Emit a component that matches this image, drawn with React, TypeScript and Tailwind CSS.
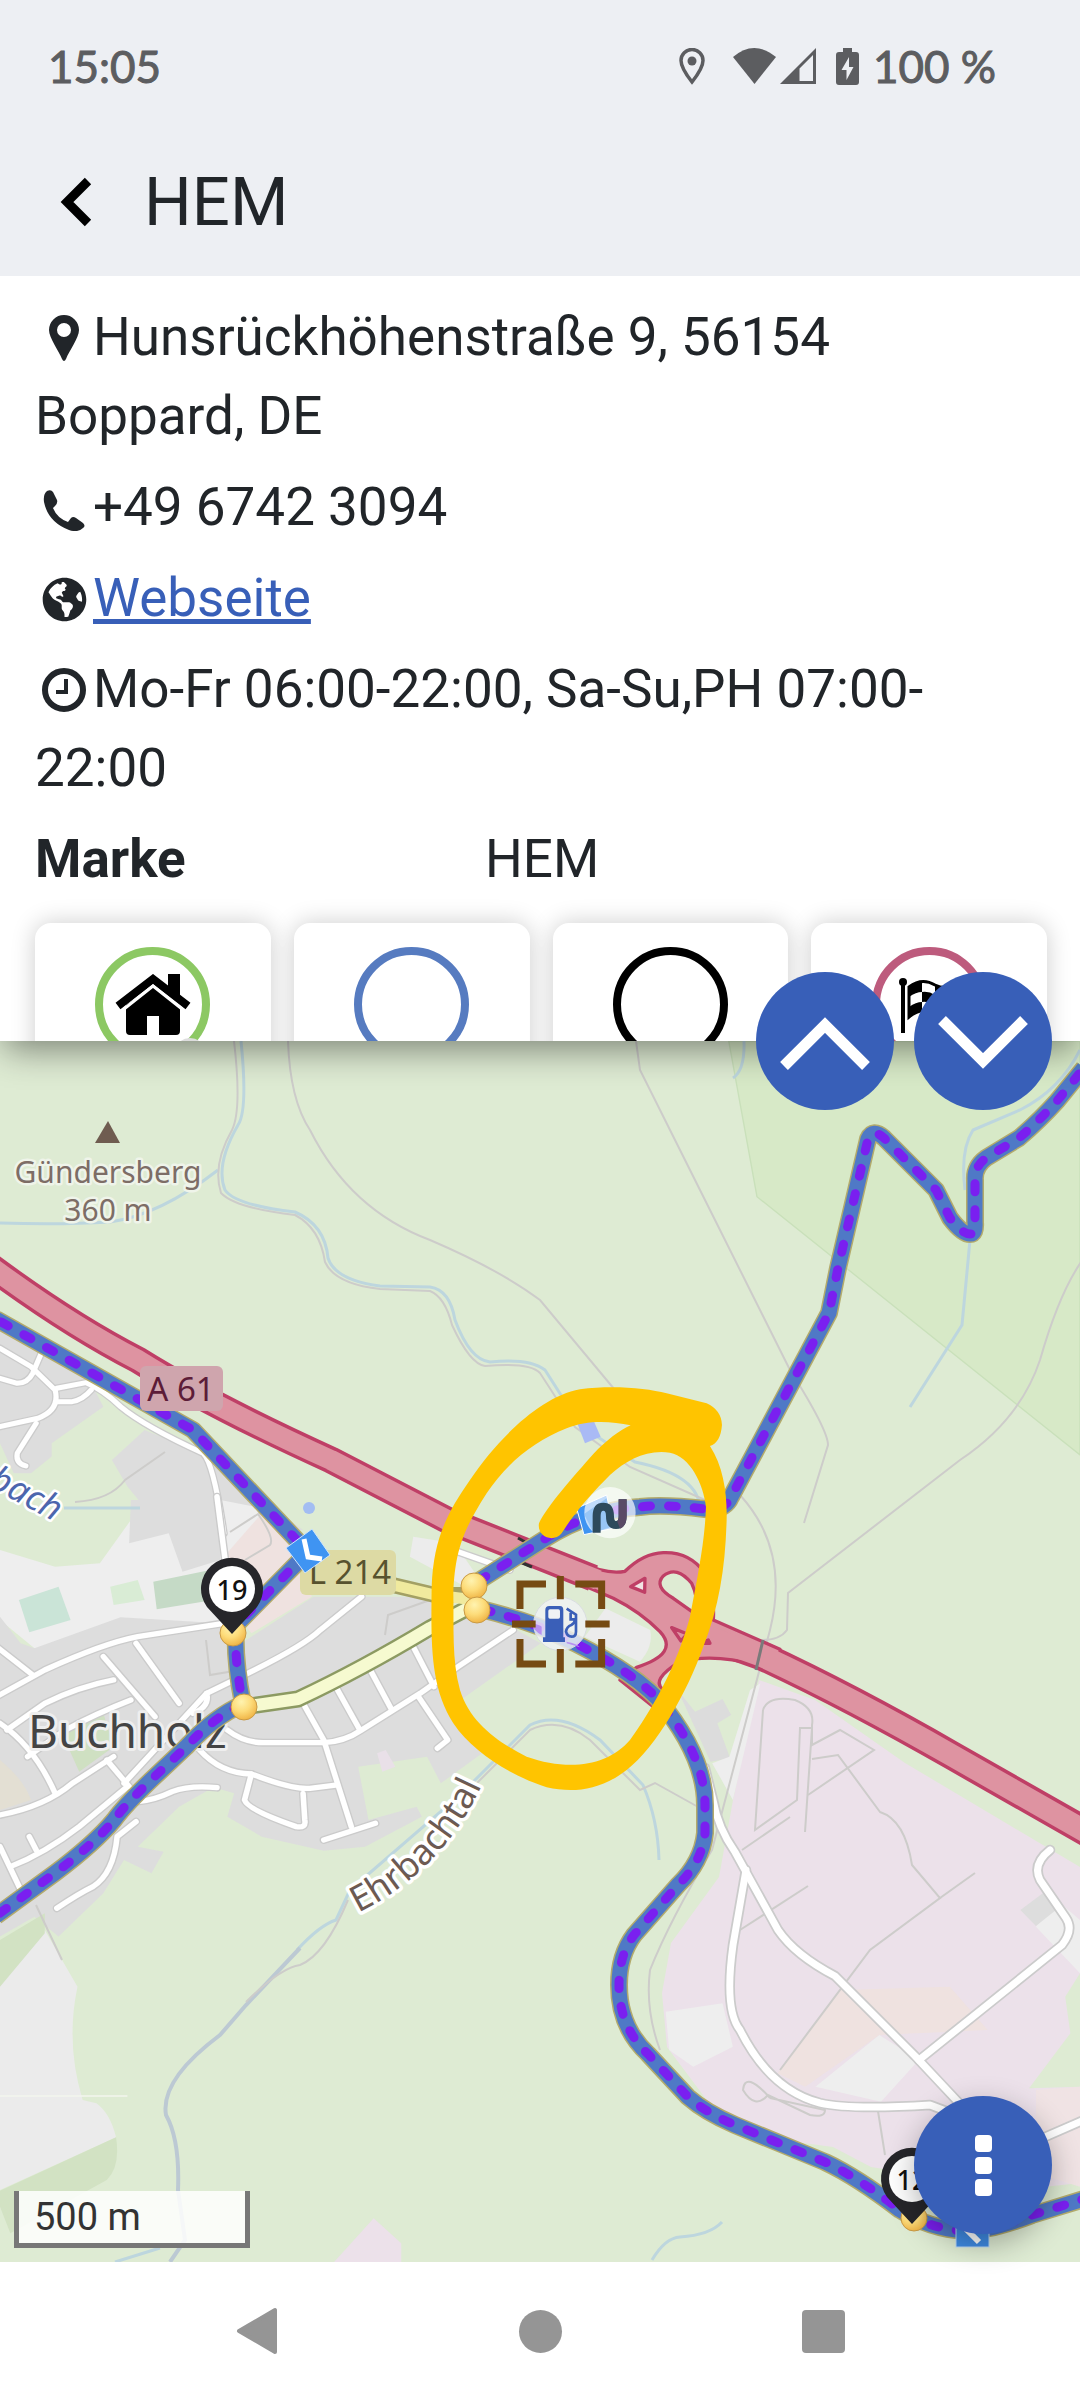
import React from "react";
import { FaGlobeAmericas } from "react-icons/fa";

const TILE = {
  nw: "translate(0 1030) scale(.3444 .3333)",
  ne: "translate(540 1030) scale(.3444 .3333)",
  w: "translate(0 1500) scale(.3444 .3333)",
  e: "translate(540 1500) scale(.3444 .3333)",
  sw: "translate(0 1900) scale(.3444 .3333)",
  se: "translate(540 1900) scale(.3444 .3333)",
  mid: "translate(380 1360) scale(.3333)",
};

const ROUTES = [
  "M-4 1319 L193 1430 L308 1552 L236 1625 Q234 1660 243 1704 Q215 1716 186 1747 L151 1780 Q125 1805 114 1820 Q95 1843 55 1873 L-4 1916",
  "M477 1608 Q533 1622 560 1636 Q625 1666 657 1698 Q705 1755 705 1805 V1833 Q702 1862 678 1885 L634 1935 Q619 1955 619 1985 Q619 2027 648 2054 L688 2097 Q705 2112 735 2125 L825 2162 Q857 2177 900 2210 Q930 2229 965 2231 Q990 2231 1032 2215 L1084 2199",
  "M474 1584 L543 1540 Q590 1510 640 1507 Q663 1504 705 1509 Q725 1511 731 1497 L829 1313 L838 1268 L868 1139 Q873 1128 884 1138 L936 1190 L950 1218 Q962 1234 970 1234 Q976 1234 975 1222 V1180 Q974 1167 986 1158 L1019 1138 Q1040 1120 1057 1101 L1084 1068",
];

const VILLAGE_ROADS = [
  "M-10 590 L130 510 Q300 430 400 410 L650 370",
  "M-10 440 L95 525",
  "M0 670 Q100 740 160 880",
  "M20 690 L130 610 Q230 560 330 540",
  "M80 770 L190 690 Q280 640 380 600",
  "M300 470 L450 650",
  "M395 430 L520 610",
  "M360 850 L600 580 L700 530 Q880 440 930 390 L1050 290",
  "M600 580 Q610 620 560 640",
  "M0 945 Q130 920 210 850 L330 770",
  "M310 780 L375 860",
  "M30 1100 Q130 1060 230 980 L370 860",
  "M0 1040 L60 1170",
  "M85 1010 L105 1050",
  "M400 905 Q450 900 500 875 Q550 855 630 863",
  "M395 965 L340 1010 Q330 1120 270 1160 Q230 1180 165 1225",
  "M660 690 Q710 730 770 728 H940 Q1000 725 1050 690 L1220 580 L1330 500 L1490 390",
  "M580 750 Q640 820 730 822 Q850 870 900 865 L980 855",
  "M730 822 L710 900 Q720 930 860 980 Q890 985 885 960 L880 880",
  "M880 610 L940 720 L1020 980",
  "M940 1020 L1090 970",
  "M975 560 L1045 690",
  "M1070 500 L1135 625",
  "M1195 430 L1260 560",
  "M1215 590 L1300 720 L1270 745",
  "M630 -10 L655 190",
  "M1330 155 L1480 210",
];

const NORTH_VILLAGE_ROADS = [
  "M0 955 L90 1010 L160 1080 Q175 1140 110 1165 L0 1190",
  "M120 970 L95 1030 Q80 1060 50 1060 L0 1045",
  "M165 1075 L250 1058 Q300 1080 350 1130 Q420 1190 590 1270 Q620 1300 650 1510",
  "M165 1115 H210 Q240 1110 265 1080",
  "M105 1180 L50 1270 Q45 1300 75 1308",
];

const PARK_ROADS = [
  "M705 1768 L713 1800 Q718 1828 735 1852 L778 1930 Q795 1955 835 1976 L915 2056 L975 2120",
  "M746 1870 L733 1945 Q724 2010 740 2030 Q770 2090 820 2103 Q850 2110 930 2105 L970 2120",
  "M919 2060 L1062 1945 Q1074 1930 1066 1918 L1040 1880 Q1032 1864 1050 1850",
  "M1045 2137 L1084 2120",
];

const PATHS = [
  "M288 1041 Q290 1100 310 1130 Q350 1210 430 1240 Q500 1270 540 1300 L615 1390",
  "M636 1041 L640 1070 L700 1190 L790 1370 Q828 1430 828 1445 L804 1523",
  "M1084 1258 Q1060 1290 1040 1360 Q1020 1420 960 1460 L788 1593 L787 1630 Q780 1640 762 1640",
  "M740 1495 Q790 1550 770 1630 L712 1850 Q670 1920 650 1970 Q645 2010 660 2050",
  "M763 1710 L755 1830 L797 1800 L800 1728 L812 1728 L805 1832",
  "M763 1710 Q768 1695 795 1700 Q815 1708 812 1725 L812 1745 L840 1730 L874 1750 L808 1795",
  "M812 1759 L838 1755 L880 1812 Q905 1820 912 1865 L940 1898 L870 1950 L780 2070",
  "M940 1898 L975 1873",
  "M742 1850 L790 1817",
  "M740 1930 L808 1886",
  "M877 2105 L885 2155",
  "M770 2098 L825 2110 Q825 2118 810 2115 L768 2095 Q755 2110 743 2090 Q745 2070 770 2098",
];

function Streets({ paths, transform, width }: { paths: string[]; transform?: string; width: number }) {
  return (
    <g transform={transform} fill="none" strokeLinecap="round" strokeLinejoin="round">
      {paths.map((d) => (
        <path key={d} d={d} stroke="#cbcbcb" strokeWidth={width * 1.5} />
      ))}
      {paths.map((d) => (
        <path key={d} d={d} stroke="#fff" strokeWidth={width} />
      ))}
    </g>
  );
}

function Pin({ x, y, label }: { x: number; y: number; label: string }) {
  return (
    <g transform={`translate(${x} ${y})`}>
      <path d="M0 45 L-25 18 A31 31 0 1 1 25 18 Z" fill="#26262a" />
      <circle r="23" fill="#fff" />
      <text y="11" textAnchor="middle" fontSize="27" fontWeight="500" fill="#111" className="font-['Noto_Sans',sans-serif]">
        {label}
      </text>
    </g>
  );
}

function MapDrawing() {
  return (
    <svg viewBox="0 1041 1080 1221" preserveAspectRatio="xMidYMid slice" className="block h-full w-full" role="img" aria-label="Karte">
      <defs>
        <radialGradient id="dot" cx=".4" cy=".3" r=".75">
          <stop offset="0" stopColor="#fff3b0" />
          <stop offset=".5" stopColor="#fddc7a" />
          <stop offset="1" stopColor="#eeb040" />
        </radialGradient>
      </defs>
      <rect y="1041" width="1080" height="1221" fill="#deebd3" />

      {/* land use */}
      <path transform={TILE.ne} d="M548 33 L630 500 L1568 1275 V33 Z" fill="#d7e9c7" stroke="#c9e0ba" strokeWidth="4" />
      <g transform={TILE.nw} fill="#dddddd">
        <path d="M0 880 L260 1050 L300 1130 L150 1240 V1280 L90 1330 L40 1330 L0 1240 Z" />
        <path d="M420 1200 L560 1260 L880 1500 L360 1540 L410 1420 L370 1370 L325 1290 Z" />
      </g>
      <g transform={TILE.w}>
        <path d="M0 150 L160 200 L290 190 L380 60 L640 0 L740 20 L880 300 L640 380 L100 445 L0 360 Z" fill="#eeeeee" />
        <path d="M380 0 H630 L640 180 L530 215 L490 100 L375 130 Z" fill="#dddddd" />
        <path d="M650 170 L760 40 L890 150 L905 290 L730 400 L660 300 Z" fill="#efe2e0" />
        <path
          d="M0 350 L60 430 L100 445 L350 352 L640 370 L700 430 L910 290 L1250 290 L1500 390 L1570 430 L1310 620 L1400 760 L1280 850 L1240 770 L1040 800 L1070 960 L1210 920 L1225 950 L1060 1040 L940 1052 L760 1010 L660 950 L680 880 L620 862 L520 920 L400 1040 L475 1055 L440 1120 L360 1080 L300 1180 L170 1310 L100 1250 L0 1310 Z"
          fill="#dddddd"
        />
        <path d="M55 300 L170 260 L205 360 L85 397 Z" fill="#cae4d7" />
        <path d="M445 245 L600 212 L620 300 L455 328 Z" fill="#c5dac6" />
        <path d="M320 260 L400 240 L420 300 L330 315 Z" fill="#d9ecd5" />
        <path d="M180 700 L300 640 L330 740 L230 815 Z" fill="#cfe0c2" />
        <path d="M0 780 Q70 840 90 900 L0 930 Z" fill="#e3dfd3" />
        <path d="M1200 110 L1320 130 L1400 250 L1360 265 L1190 170 Z" fill="#ececec" />
        <path d="M1095 760 L1120 750 L1148 800 L1110 815 Z" fill="#e9e0e8" />
      </g>
      <g transform={TILE.sw}>
        <path d="M130 90 L225 260 Q190 430 240 600 L280 610 Q320 640 337 712 L0 870 V250 Z" fill="#ebebeb" />
        <path d="M0 120 L130 40 V100 L0 260 Z M337 712 Q350 800 310 840 L30 1000 L0 920 V872 Z" fill="#d2e2c3" />
        <path d="M1085 955 L1165 1030 V1086 H970 Z" fill="#ece1ea" />
        <path d="M0 588 H370" stroke="#f3f6ee" strokeWidth="5" />
      </g>
      <path
        d="M759 1680 L815 1700 L905 1763 L1080 1867 V2183 L1015 2190 L871 2167 L833 2147 L781 2140 L712 2107 L667 2047 L662 1993 L671 1943 L719 1877 L733 1800 Z"
        fill="#ece1ea"
      />
      <g transform={TILE.se}>
        <path d="M365 335 L530 310 L560 440 L445 500 L375 450 Z M985 405 L800 560 L990 605 L1100 480 Z M1500 0 L1568 60 V220 L1440 80 Z" fill="#eeeeee" />
        <path d="M870 270 L1190 260 L1300 390 L985 405 L770 560 L690 520 Z" fill="#efe2e0" />
        <path d="M1568 220 L1525 290 L1540 400 L1420 565 L1568 560 Z" fill="#deebd3" />
        <path d="M1440 570 L1568 560 V860 L1440 820 Z" fill="#f0e3e4" />
        <path d="M1395 30 L1460 -20 L1510 20 L1440 78 Z" fill="#dddddd" />
      </g>
      <g transform={TILE.e}>
        <path d="M400 570 L450 635 L530 597 L555 645 L515 670 L552 775 L495 785 Z" fill="#dcdcdc" />
        <path d="M610 570 L640 550 L560 900 L500 790 L550 770 Z" fill="#eeeeee" />
        <path d="M190 325 L320 390 Q330 440 290 485 L130 410 Z" fill="#ececec" />
      </g>

      {/* water */}
      <g fill="none" stroke="#bdd6de" strokeWidth="3">
        <path d="M241 1041 Q248 1110 238 1125 Q215 1165 225 1190 Q235 1205 295 1212 Q325 1225 328 1258 Q335 1280 380 1286 L430 1287 Q450 1290 455 1320 Q470 1360 490 1362 Q530 1358 545 1370 L580 1425 L635 1462 Q700 1475 700 1510" />
        <path d="M0 1223 Q60 1225 110 1222 Q160 1215 218 1170" />
        <path d="M1080 1050 Q1060 1090 1020 1110 L973 1130 Q960 1150 965 1190 M970 1240 L962 1325 L910 1407" />
        <path d="M64 1508 H140 M744 1041 Q745 1070 733 1078" />
        <path d="M297 1950 Q320 1925 336 1920 L350 1890 L460 1795 L530 1725 Q560 1710 600 1740 L643 1785 Q658 1820 659 1860" />
        <path d="M652 2260 Q665 2238 680 2237 Q710 2235 722 2222 M115 2262 L160 2248" />
      </g>
      <g fill="none" stroke="#bcc9d3" strokeWidth="4">
        <path d="M300 1948 L246 2005 L220 2035 Q160 2080 166 2115 Q180 2140 178 2190 L185 2240 L170 2262" />
      </g>
      <g fill="none" stroke="#cdccca" strokeWidth="2">
        <path d="M348 1900 Q325 1955 300 1965 Q280 1968 246 2002" />
        <path d="M234 1041 Q242 1110 232 1130 Q212 1165 221 1193 Q235 1208 295 1215 Q320 1228 325 1262 Q335 1284 380 1289 L430 1291 Q445 1297 452 1325 Q470 1364 485 1366 Q530 1362 540 1373 L575 1427 L630 1467 L705 1500" />
        {PATHS.map((d) => (
          <path key={d} d={d} />
        ))}
        <path d="M465 1795 L530 1730 Q560 1716 590 1740 L640 1790 L655 1783 L700 1808" />
        <path d="M230 1532 L258 1514 Q275 1538 270 1545 L245 1560 M206 1640 L210 1675 L240 1670 M385 1635 L388 1615 L430 1600" />
        <path d="M36 1905 L62 1960 M75 1502 Q110 1500 125 1480 L165 1452" />
      </g>
      <path transform={TILE.mid} d="M590 185 L640 180 L662 230 L615 250 Z" fill="#a9baf5" />
      <circle cx="309" cy="1508" r="6" fill="#a3bdf2" />

      {/* streets */}
      <Streets paths={NORTH_VILLAGE_ROADS} transform={TILE.nw} width={15} />
      <Streets paths={VILLAGE_ROADS} transform={TILE.w} width={16} />
      <Streets paths={PARK_ROADS} width={7} />
      <g fill="none" strokeLinejoin="round">
        <path d="M243 1707 L298 1699 Q360 1670 430 1628 L470 1607" stroke="#8c9a62" strokeWidth="17" />
        <path d="M380 1582 L435 1595 L470 1595" stroke="#a3a064" strokeWidth="16" />
        <path d="M243 1707 L298 1699 Q360 1670 430 1628 L470 1607" stroke="#f6fad0" strokeWidth="12" />
        <path d="M380 1582 L435 1595 L475 1600" stroke="#f0ea9e" strokeWidth="11" />
      </g>

      {/* motorway with its junction */}
      <g fill="none" strokeLinejoin="round">
        <path d="M-10 1266 Q70 1325 138 1360 Q210 1405 331 1460 L447 1520 L593 1578" stroke="#bf3f66" strokeWidth="27" />
        <path d="M700 1634 L762 1656 Q850 1697 953 1756 L1090 1834" stroke="#bf3f66" strokeWidth="29" />
        <path
          transform={TILE.mid}
          d="M600 607 Q680 645 735 634 Q790 580 850 578 Q930 575 975 640 Q1005 700 1000 780 L1200 868 L1200 950 L1130 915 Q1000 880 900 905 Q810 960 850 990 L820 1040 L720 960 L770 922 Q900 880 840 815 Q780 755 700 715 L560 655 Z"
          fill="#de93a1"
          stroke="#bf3f66"
          strokeWidth="10"
        />
        <path d="M-10 1266 Q70 1325 138 1360 Q210 1405 331 1460 L447 1520 L598 1580" stroke="#de93a1" strokeWidth="20" />
        <path d="M700 1634 L762 1656 Q850 1697 953 1756 L1090 1834" stroke="#de93a1" strokeWidth="22" />
        <g transform={TILE.mid} stroke="#bf3f66" strokeWidth="10">
          <path d="M850 648 Q890 615 935 670 Q955 710 950 765 L880 715 Q820 680 850 648 Z" fill="#deebd3" />
          <path d="M795 655 L752 680 L794 697 Z" fill="#f2e4e4" />
          <path d="M875 803 L903 843 L922 822 Z M985 840 L960 850 L990 850 Z" />
        </g>
        <path d="M763 1640 L756 1670" stroke="#7a7a7a" strokeWidth="3" />
        <path d="M518 1538 L527 1543 M520 1562 L532 1567" stroke="#333" strokeWidth="3" />
      </g>

      {/* map labels */}
      <g className="font-['Noto_Sans',sans-serif]" paintOrder="stroke" strokeLinejoin="round">
        <path d="M108 1121 L120 1143 H95 Z" fill="#6f5c50" />
        <g fill="#7d6d66" stroke="#eff4ea" strokeWidth="5" fontSize="30" textAnchor="middle">
          <text x="108" y="1183">Gündersberg</text>
          <text x="108" y="1221">360 m</text>
        </g>
        <text fontSize="35" fontStyle="italic" fill="#4c66ad" stroke="#fff" strokeWidth="5" transform="translate(-13 1486) rotate(28)">
          bach
        </text>
        <text x="28" y="1748" fontSize="46" fill="#444" stroke="#eee" strokeWidth="6">
          Buchholz
        </text>
        <path id="valley" d="M358 1913 Q445 1870 484 1780" fill="none" />
        <text fontSize="36" fill="#6c5a52" stroke="#fff" strokeWidth="7">
          <textPath href="#valley">Ehrbachtal</textPath>
        </text>
        <rect x="300" y="1550" width="96" height="45" rx="6" fill="#dddaa4" />
        <text x="350" y="1584" fontSize="33" textAnchor="middle" fill="#57522e">
          L 214
        </text>
      </g>

      {/* planned route */}
      <g fill="none" strokeLinejoin="round">
        {ROUTES.map((d) => (
          <g key={d}>
            <path d={d} stroke="#b3ab6c" strokeWidth="18" />
            <path d={d} stroke="#4f79c6" strokeWidth="15" />
            <path d={d} stroke="#7a1ff0" strokeWidth="9" strokeLinecap="round" strokeDasharray="8 18" strokeDashoffset="-6" />
          </g>
        ))}
      </g>
      <g className="font-['Noto_Sans',sans-serif]">
        <rect x="140" y="1366" width="83" height="45" rx="6" fill="#cfa5ad" />
        <text x="181" y="1401" fontSize="33" textAnchor="middle" fill="#5c1c38">
          A 61
        </text>
      </g>
      <path d="M312 1529 L330 1555 L305 1573 L286 1548 Z" fill="#3f94f2" stroke="#cfe4fb" />
      <path d="M304 1539 L308 1557 L322 1559" fill="none" stroke="#fff" strokeWidth="5" />

      {/* waypoints */}
      <g fill="url(#dot)" stroke="#c99a45">
        <circle cx="474" cy="1586" r="13" />
        <circle cx="477" cy="1610" r="13" />
        <circle cx="233" cy="1633" r="13" />
        <circle cx="244" cy="1707" r="13" />
        <circle cx="914" cy="2218" r="13" />
      </g>
      <Pin x={232} y={1589} label="19" />
      <Pin x={912} y={2179} label="12" />
      <rect x="956" y="2214" width="33" height="33" fill="#3f8be4" stroke="#bcd9f7" />
      <path d="M963 2226 L979 2242" stroke="#fff" strokeWidth="6" />

      <g transform={TILE.mid}>
        <path d="M590 445 L680 405 L700 505 L612 524 Z" fill="#3f94f2" stroke="#fff" strokeWidth="3" />
        <circle cx="690" cy="458" r="77" fill="#fff" fillOpacity=".68" />
        <path d="M612 462 L680 415 L695 500 L640 518 Z" fill="#7db8f3" fillOpacity=".6" />
        <path d="M650 518 V468 Q650 440 670 440 Q690 440 690 468 Q690 495 708 495 Q728 495 728 468 V418" fill="none" stroke="#2d4a5c" strokeWidth="24" />
        <path d="M716 495 Q728 490 728 468 V418" fill="none" stroke="#5a4a66" strokeWidth="24" />

        <circle cx="541" cy="792" r="80" fill="#f0f2f4" fillOpacity=".82" stroke="#d9dde0" strokeWidth="3" />
        <path d="M455 790 Q480 795 485 800 V825 Q462 815 455 790 Z M560 845 Q590 850 600 862 L560 850 Z" fill="#b890f0" />
        <path d="M496 750 Q496 738 508 738 H540 Q550 738 550 750 V832 H555 V846 H489 V832 H496 Z" fill="#3a5fb8" />
        <rect x="505" y="748" width="35" height="28" rx="5" fill="#f0f2f4" />
        <path d="M560 746 L588 764 V815 Q588 830 575 830 Q562 830 558 815 Q560 800 574 795 Q584 790 586 778 H572 V758" fill="none" stroke="#3a5fb8" strokeWidth="8" />
        <path
          d="M498 672 H420 V747 M586 672 H665 V747 M420 837 V912 H498 M665 837 V912 H586 M541 648 V718 M541 867 V938 M396 792 H467 M616 792 H689"
          fill="none"
          stroke="#764b13"
          strokeWidth="21"
        />

        {/* hand-drawn highlight */}
        <path
          fillRule="evenodd"
          fill="#ffc400"
          d="M1026 195 Q1022 248 990 258 C1030 320 1042 400 1040 480 C1036 620 1018 740 970 860 C920 1000 830 1160 740 1230 C660 1292 580 1300 500 1282 C400 1250 280 1180 220 1090 C150 980 153 850 155 680 C160 540 200 460 270 360 C350 240 480 110 600 88 C700 75 800 85 860 100 L980 130 Q1024 150 1026 195 Z
             M752 196 C690 183 620 180 560 205 C460 245 380 310 320 400 C250 510 225 570 220 700 C222 800 215 900 240 990 C270 1090 360 1150 440 1190 C560 1232 680 1222 750 1140 C850 1000 900 880 930 770 C955 640 975 540 978 440 C970 370 930 290 870 278 C800 268 740 300 690 345 C640 395 585 455 545 520 C520 550 470 530 477 490 C500 440 580 350 640 282 C680 240 720 210 752 196 Z"
        />
      </g>
    </svg>
  );
}

function StatusBar() {
  return (
    <div className="flex h-[132px] items-center justify-between pl-12 pr-[84px] font-['Lato',sans-serif] text-[44px] leading-none text-[#5c5d60] [-webkit-text-stroke:1px_#5c5d60]">
      <time>15:05</time>
      <div className="flex items-center">
        <svg viewBox="0 0 26 37" className="mr-7 h-[37px] w-[26px]" aria-hidden="true">
          <path d="M13 34 Q2 20 2 12.500 A11 11 0 0 1 24 12.500 Q24 20 13 34 Z" fill="none" stroke="currentColor" strokeWidth="3.500" />
          <circle cx="13" cy="13" r="4.500" fill="currentColor" />
        </svg>
        <svg viewBox="0 0 43 36" className="mr-1 h-9 w-[43px]" aria-hidden="true">
          <path d="M0 9 Q21 -9 43 9 L21.500 36 Z" fill="currentColor" />
        </svg>
        <svg viewBox="0 0 36 36" className="mr-5 h-9 w-9" aria-hidden="true">
          <path d="M36 0 V36 H0 Z M33 7 L19.500 20.500 V33 H33 Z" fill="currentColor" fillRule="evenodd" />
        </svg>
        <svg viewBox="0 0 23 37" className="mr-[14px] h-[37px] w-[23px]" aria-hidden="true">
          <path d="M7 0 H16 V4 H20 Q23 4 23 7 V34 Q23 37 20 37 H3 Q0 37 0 34 V7 Q0 4 3 4 H7 Z" fill="currentColor" />
          <path d="M13 9 L5.500 22 H10.500 V32 L17.500 19 H13 Z" fill="#edeff3" />
        </svg>
        <span>100 %</span>
      </div>
    </div>
  );
}

function ItemIcon({ children }: { children: React.ReactNode }) {
  return <span className="inline-flex w-[58px] items-center justify-center align-[-6px]">{children}</span>;
}

function ActionCard({ label, ring, children }: { label: string; ring: string; children?: React.ReactNode }) {
  return (
    <button
      type="button"
      aria-label={label}
      className="flex h-60 flex-1 justify-center rounded-2xl bg-white pt-6 shadow-[0_0_24px_rgba(0,0,0,0.2)]"
    >
      <span className={`relative flex h-[115px] w-[115px] items-center justify-center rounded-full border-8 ${ring}`}>{children}</span>
    </button>
  );
}

const FAB = "flex h-[138px] w-[138px] items-center justify-center rounded-full bg-[#385fb8] text-white";

export default function App() {
  return (
    <div className="flex min-h-screen flex-col bg-white font-['Roboto',sans-serif] text-[#212529]">
      <header className="relative z-20 bg-[#edeff3]">
        <StatusBar />
        <div className="flex h-36 items-center pb-1">
          <button type="button" aria-label="Zurück" className="ml-14 flex w-[84px] text-black">
            <svg viewBox="0 0 42 50" className="h-[50px] w-[42px]" fill="none" stroke="currentColor" strokeWidth="9" aria-hidden="true">
              <path d="M32 4 L11 25 L32 46" />
            </svg>
          </button>
          <h1 className="ml-1 text-[67px] leading-none">HEM</h1>
        </div>
      </header>

      <main className="flex flex-1 flex-col">
        <section className="relative z-10 bg-white pt-[22px] shadow-[0_12px_34px_-4px_rgba(0,0,0,0.45)]">
          <div className="flex flex-col gap-3 px-[35px] text-[53px] leading-[79px]">
            <p>
              <ItemIcon>
                <svg viewBox="0 0 32 46" className="h-[46px] w-8" aria-hidden="true">
                  <path
                    d="M16 0 A15 15 0 0 1 31 15 C31 23 21 36 18 44 Q16 48 14 44 C11 36 1 23 1 15 A15 15 0 0 1 16 0 Z M16 8 A7 7 0 0 0 16 22 A7 7 0 0 0 16 8 Z"
                    fill="currentColor"
                    fillRule="evenodd"
                  />
                </svg>
              </ItemIcon>
              Hunsrückhöhenstraße 9, 56154 Boppard, DE
            </p>
            <p>
              <ItemIcon>
                <svg viewBox="0 0 42 41" className="h-[41px] w-[42px]" aria-hidden="true">
                  <path
                    d="M4 1 Q8 -1 10 2 L14 10 Q15 13 12 16 L10 18 Q14 28 25 32 L28 28 Q30 26 33 28 L40 33 Q43 36 40 38 Q35 43 26 40 Q5 32 1 12 Q0 4 4 1 Z"
                    fill="currentColor"
                  />
                </svg>
              </ItemIcon>
              +49 6742 3094
            </p>
            <p>
              <ItemIcon>
                <FaGlobeAmericas className="h-[45px] w-[45px]" />
              </ItemIcon>
              <a href="#webseite" className="text-[#385fb8] underline">
                Webseite
              </a>
            </p>
            <p>
              <ItemIcon>
                <svg viewBox="0 0 46 46" className="h-[46px] w-[46px]" fill="none" stroke="currentColor" aria-hidden="true">
                  <circle cx="23" cy="23" r="19" strokeWidth="6" />
                  <path d="M25 12 V25 H15" strokeWidth="4" />
                </svg>
              </ItemIcon>
              Mo-Fr 06:00-22:00, Sa-Su,PH 07:00-22:00
            </p>
            <dl className="grid grid-cols-[450px_1fr]">
              <dt className="font-bold">Marke</dt>
              <dd>HEM</dd>
            </dl>
          </div>
          <div className="flex h-[142px] gap-[23px] overflow-hidden pl-[35px] pr-[33px] pt-6">
            <ActionCard label="Start" ring="border-[#8cc863]">
              <svg viewBox="0 0 76 62" className="h-[62px] w-[76px]" aria-hidden="true">
                <path d="M11 31 L38 13 L65 34 V57 Q65 61 61 61 H44 V42 H32 V61 H15 Q11 61 11 57 Z" />
                <path d="M3 32 L38 5 L73 32" fill="none" stroke="#000" strokeWidth="8" />
                <path d="M9 35 L38 12 L67 35" fill="none" stroke="#fff" strokeWidth="3" />
                <path d="M53 0 H65 V24 L53 14 Z" />
              </svg>
              <span className="absolute -bottom-4 -right-1 h-8 w-8 rounded-full bg-[#dddddd]" />
            </ActionCard>
            <ActionCard label="Zwischenziel" ring="border-[#567bc0]" />
            <ActionCard label="Wegpunkt" ring="border-black" />
            <ActionCard label="Ziel" ring="border-[#bd5b7d]">
              <svg viewBox="0 0 64 56" className="h-14 w-16" aria-hidden="true">
                <path d="M6 4 V56" stroke="#000" strokeWidth="4" />
                <circle cx="6" cy="5" r="4" />
                <path d="M12 10 Q25 0 38 8 Q48 13 58 8 V36 Q48 44 36 36 Q24 30 12 40 Z" fill="#fff" stroke="#000" strokeWidth="3" />
                <path d="M12 10 Q19 5 25 5 V15 Q19 15 12 20 Z M25 15 Q32 14 38 18 V28 Q31 24 25 25 Z M12 30 Q19 25 25 25 V33 Q19 34 12 40 Z M38 8 Q45 12 50 11 V21 Q44 22 38 18 Z" />
              </svg>
            </ActionCard>
          </div>
        </section>

        <section className="relative flex-1" aria-label="Kartenansicht">
          <MapDrawing />

          <div className="absolute -top-[69px] right-7 z-20 flex gap-5">
            <button type="button" aria-label="Nach oben" className={FAB}>
              <svg viewBox="0 0 90 54" className="mt-1 h-[54px] w-[90px]" fill="none" stroke="currentColor" strokeWidth="11" aria-hidden="true">
                <path d="M4 50 L45 9 L86 50" />
              </svg>
            </button>
            <button type="button" aria-label="Nach unten" className={FAB}>
              <svg viewBox="0 0 90 54" className="mt-1 h-[54px] w-[90px]" fill="none" stroke="currentColor" strokeWidth="11" aria-hidden="true">
                <path d="M4 4 L45 45 L86 4" />
              </svg>
            </button>
          </div>

          <div className="absolute bottom-[14px] left-[14px] w-[236px] border-x-[5px] border-b-[5px] border-[#777] bg-white/85 py-1 pl-[15px] text-[38px] leading-[44px] text-[#333]">
            500 m
          </div>

          <button
            type="button"
            aria-label="Menü"
            className="absolute bottom-7 right-7 flex h-[138px] w-[138px] flex-col items-center justify-center gap-[5px] rounded-full bg-[#385fb8] shadow-[0_10px_30px_rgba(0,0,0,0.3)]"
          >
            <span className="h-[17px] w-[17px] rounded bg-white" />
            <span className="h-[17px] w-[17px] rounded bg-white" />
            <span className="h-[17px] w-[17px] rounded bg-white" />
          </button>
        </section>
      </main>

      <nav className="flex h-[138px] items-center justify-center gap-60 bg-white text-[#959595]" aria-label="Systemnavigation">
        <button type="button" aria-label="Zurück">
          <svg viewBox="0 0 43 48" className="h-12 w-[43px]" fill="currentColor" stroke="currentColor" strokeWidth="4" strokeLinejoin="round" aria-hidden="true">
            <path d="M3 24 L39 3 V45 Z" />
          </svg>
        </button>
        <button type="button" aria-label="Startbildschirm" className="h-[43px] w-[43px] rounded-full bg-[#959595]" />
        <button type="button" aria-label="Übersicht" className="h-[43px] w-[43px] rounded bg-[#959595]" />
      </nav>
    </div>
  );
}
